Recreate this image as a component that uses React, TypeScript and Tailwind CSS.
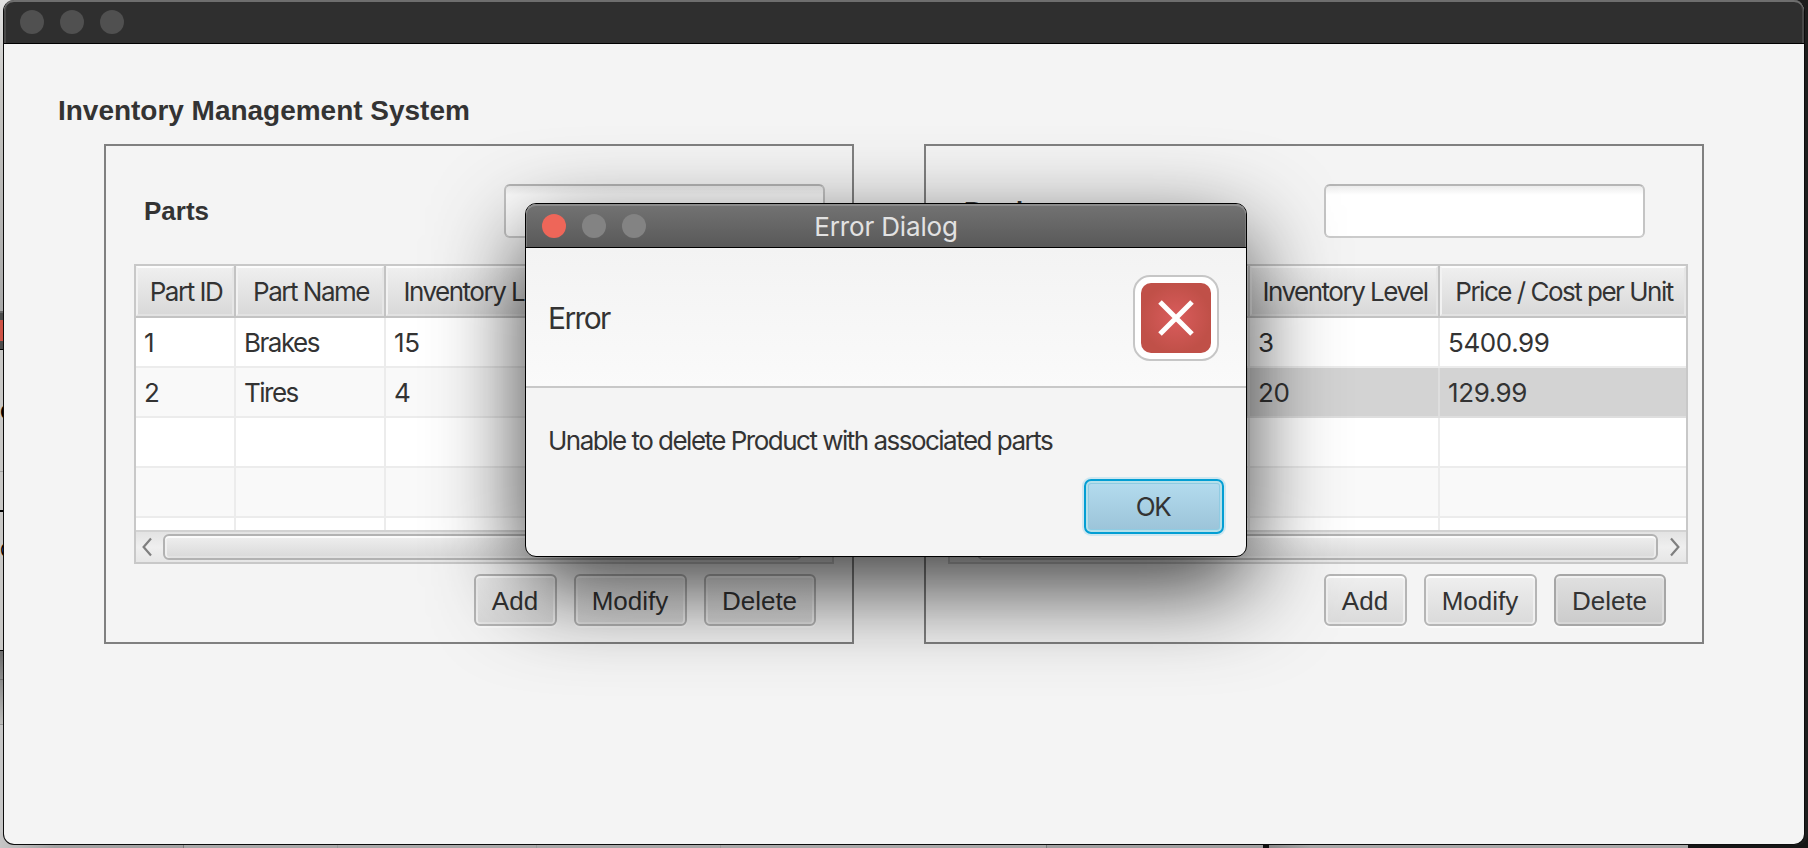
import React from 'react';

type Column = { label: string; width: string };
type Table = { columns: Column[]; rows: string[][]; selected?: number; thumbEnd: string };

const partsTable: Table = {
  columns: [
    { label: 'Part ID', width: 'w-[100px]' },
    { label: 'Part Name', width: 'w-[150px]' },
    { label: 'Inventory Level', width: 'w-[200px]' },
    { label: 'Price / Cost per Unit', width: 'w-[246px]' },
  ],
  rows: [['1', 'Brakes', '15', ''], ['2', 'Tires', '4', ''], [], []],
  thumbEnd: 'mr-[30px]',
};

const productsTable: Table = {
  columns: [
    { label: 'Product ID', width: 'w-[134px]' },
    { label: 'Product Name', width: 'w-[166px]' },
    { label: 'Inventory Level', width: 'w-[190px]' },
    { label: 'Price / Cost per Unit', width: 'w-[246px]' },
  ],
  rows: [['', '', '3', '5400.99'], ['', '', '20', '129.99'], [], []],
  selected: 1,
  thumbEnd: 'mr-[28px]',
};

function isNumber(text: string) {
  return /^[\d.]+$/.test(text);
}

function Arrow({ right = false }: { right?: boolean }) {
  return (
    <svg width="10" height="20" viewBox="0 0 10 20" fill="none" className="shrink-0">
      <path d={right ? 'M1 1.5 L8.4 10 L1 18.5' : 'M9 1.5 L1.6 10 L9 18.5'} stroke="#7f7f7f" strokeWidth="2.2" />
    </svg>
  );
}

function DataTable({ table }: { table: Table }) {
  const last = table.columns.length - 1;
  return (
    <div className="flex h-[300px] flex-col overflow-hidden border-2 border-[#c8c8c8] bg-white font-[Inter,sans-serif] text-[26px] leading-8 text-[#333333]">
      <div className="flex h-[52px] shrink-0 border-b-2 border-[#c3c3c3]">
        {table.columns.map((c, i) => (
          <div key={c.label} className={`${c.width} shrink-0 ${i < last ? 'border-r-2 border-[#c3c3c3]' : ''}`}>
            <div className="flex h-full items-center justify-center border-2 border-t-[#fcfcfc] border-r-[#e6e6e6] border-b-[#e2e2e2] border-l-[#f2f2f2] bg-linear-to-b from-[#efefef] to-[#d9d9d9] pt-[2px] pl-[2px] tracking-[-1.5px] whitespace-nowrap">
              {c.label}
            </div>
          </div>
        ))}
      </div>
      <div className="flex h-[212px] shrink-0 flex-col overflow-hidden">
        {[...table.rows, []].map((row, r) => {
          const selected = table.selected === r;
          const fill = selected ? 'bg-[#d3d3d3]' : r % 2 ? 'bg-[#f9f9f9]' : 'bg-white';
          const line = selected ? 'border-[#dedede]' : 'border-[#ececec]';
          return (
            <div key={r} className={`flex h-[50px] shrink-0 border-b-2 ${fill} ${line}`}>
              {table.columns.map((c, i) => (
                <div
                  key={c.label}
                  className={`${c.width} flex shrink-0 items-center pt-[2px] pl-2 ${i < last ? `border-r-2 ${line}` : ''} ${isNumber(row[i] ?? '') ? 'tracking-[-0.4px]' : 'tracking-[-1.5px]'}`}
                >
                  {row[i]}
                </div>
              ))}
            </div>
          );
        })}
      </div>
      <div className="flex h-8 shrink-0 items-center border-t-2 border-[#d2d2d2] bg-linear-to-b from-[#e3e3e3] via-[#efefef] to-[#e6e6e6] pl-[6px]">
        <Arrow />
        <div className={`ml-[11px] h-[26px] flex-1 rounded-md border-2 border-[#b2b2b2] bg-linear-to-b from-[#efefef] to-[#d9d9d9] shadow-[inset_0_2px_0_#fbfbfb,inset_2px_0_0_#f0f0f0,inset_-2px_0_0_#ececec,inset_0_-2px_0_#e2e2e2] ${table.thumbEnd}`} />
        <div className="-ml-[16px] flex w-[16px] shrink-0">
          <Arrow right />
        </div>
      </div>
    </div>
  );
}

function PanelButton({ label, width, pressed = false }: { label: string; width: string; pressed?: boolean }) {
  const tone = pressed
    ? 'border-[#a6a6a6] from-[#e0e0e0] to-[#cbcbcb] shadow-[inset_0_2px_0_#f0f0f0,inset_2px_0_0_#dedede,inset_-2px_0_0_#dedede,inset_0_-2px_0_#d6d6d6,0_2px_0_#fafafa]'
    : 'border-[#b5b5b5] from-[#efefef] to-[#dadada] shadow-[inset_0_2px_0_#fdfdfd,inset_2px_0_0_#f0f0f0,inset_-2px_0_0_#f0f0f0,inset_0_-2px_0_#e6e6e6,0_2px_0_#fafafa]';
  return (
    <button className={`${width} flex h-[52px] items-center justify-center rounded-md border-2 bg-linear-to-b pt-[2px] pr-px text-[26px] leading-8 text-[#333333] ${tone}`}>
      {label}
    </button>
  );
}

function Panel({ title, table, size, tableSize, pressed }: { title: string; table: Table; size: string; tableSize: string; pressed?: boolean }) {
  return (
    <section className={`${size} flex h-[500px] flex-col border-2 border-[#808080] pt-[38px]`}>
      <div className="flex items-center pl-[38px]">
        <h2 className="w-[360px] text-[26px] leading-8 font-bold">{title}</h2>
        <div className="h-[54px] w-[321px] rounded-md border-2 border-t-[#b5b5b5] border-r-[#c4c4c4] border-b-[#cbcbcb] border-l-[#c4c4c4] bg-linear-to-b from-[#ececec] via-white via-[18%] to-white" />
      </div>
      <div className={`mt-[26px] ${tableSize}`}>
        <DataTable table={table} />
      </div>
      <div className="mt-[10px] flex justify-end gap-[17px] pr-[36px]">
        <PanelButton label="Add" width="w-[83px]" />
        <PanelButton label="Modify" width="w-[113px]" />
        <PanelButton label="Delete" width="w-[112px]" pressed={pressed} />
      </div>
    </section>
  );
}

function Lights({ first, rest }: { first: string; rest: string }) {
  return (
    <div className="flex gap-4">
      <span className={`size-6 rounded-full ${first}`} />
      <span className={`size-6 rounded-full ${rest}`} />
      <span className={`size-6 rounded-full ${rest}`} />
    </div>
  );
}

function ErrorDialog() {
  return (
    <div className="absolute top-[203px] left-[525px] flex h-[354px] w-[722px] flex-col overflow-hidden rounded-[11px] border border-black bg-[#f4f4f4] font-[Inter,sans-serif] text-[#333333] shadow-[0_31px_90px_rgba(0,0,0,0.76)]">
      <div className="relative flex h-11 shrink-0 items-center justify-center rounded-t-[10px] border-b border-black bg-linear-to-b from-[#737373] to-[#595959] shadow-[inset_0_2px_0_#8c8c8c,inset_1px_0_0_#7c7c7c,inset_-1px_0_0_#7c7c7c]">
        <div className="absolute left-4">
          <Lights first="bg-[#ee6659]" rest="bg-[#838383]" />
        </div>
        <span className="pt-[2px] text-[26px] leading-8 tracking-[-0.15px] text-[#e2e2e2]">Error Dialog</span>
      </div>
      <div className="flex h-[140px] shrink-0 items-center justify-between border-b-2 border-[#c8c8c8] bg-linear-to-b from-[#f3f3f3] to-[#fafafa] pt-[2px] pr-[27px] pl-[22px]">
        <span className="text-[30px] leading-9 tracking-[-1.65px]">Error</span>
        <div className="flex size-[86px] items-center justify-center rounded-[17px] border-2 border-[#c6c6c6] bg-white">
          <div className="flex size-[70px] items-center justify-center rounded-[10px] bg-radial from-[#da5c5c] to-[#c05048] to-70%">
            <svg width="36" height="36" viewBox="0 0 36 36" stroke="white" strokeWidth="5">
              <path d="M2 2 L34 34 M34 2 L2 34" />
            </svg>
          </div>
        </div>
      </div>
      <div className="flex flex-1 flex-col pl-[22px]">
        <p className="mt-[37px] text-[26px] leading-8 tracking-[-1.51px] whitespace-nowrap">Unable to delete Product with associated parts</p>
        <button className="mt-[22px] mr-[22px] flex h-[55px] w-[140px] items-center justify-center self-end rounded-[7px] border-2 border-[#039ed3] bg-linear-to-b from-[#b4dcef] to-[#9bc3d8] pt-px pr-[2px] text-[26px] leading-8 tracking-[-1.4px] shadow-[inset_0_0_0_2px_#b5e0ea,inset_0_0_0_3px_#8fcbe2,0_0_0_2px_#cfe7f0]">
          OK
        </button>
      </div>
    </div>
  );
}

function Backdrop() {
  return (
    <div className="absolute inset-0 flex flex-col">
      <div className="relative flex w-4 flex-1 flex-col overflow-hidden bg-[#c9c8c6]">
        <div className="h-[311px] shrink-0 bg-linear-to-b from-[#e2e2e2] via-[#c6c5c2] via-30% to-[#a9a9a9]" />
        <div className="h-[9px] shrink-0 border-t-2 border-[#6a6a6a] bg-[#4c4c4c]" />
        <div className="h-[21px] shrink-0 bg-[#cf5346]" />
        <div className="h-[9px] shrink-0 border-b border-black bg-[#4c4c4c]" />
        <div className="h-[122px] shrink-0 border-b border-[#a2a2a2] pt-[50px] font-[Inter,sans-serif] text-[22px] leading-[24px] font-bold text-black">O</div>
        <div className="h-[40px] shrink-0 border-b-2 border-black" />
        <div className="h-[139px] shrink-0 border-b border-black pt-[27px] font-[Inter,sans-serif] text-[18px] leading-[24px] text-black">O</div>
        <div className="h-[29px] shrink-0 border-b border-[#6e6e6e] bg-linear-to-b from-[#6c6c6c] to-[#8c8c8c]" />
        <div className="h-[45px] shrink-0 border-b border-[#9a9a9a] bg-linear-to-b from-[#8c8c8c] to-[#bcbcba]" />
        <div className="flex-1 bg-[#c6c6c6]" />
      </div>
      <div className="flex h-4 shrink-0 bg-[#a8a8a8]">
        <div className="w-[184px] border-r border-[#7c7c7c] bg-linear-to-r from-[#c6c6c6] to-[#a2a2a2] to-30%" />
        <div className="w-[154px] border-r border-[#9a9a9a]" />
        <div className="w-[199px] border-r border-[#9a9a9a]" />
        <div className="w-[184px] border-r border-[#9a9a9a]" />
        <div className="w-[326px] border-r border-[#7c7c7c]" />
        <div className="w-[216px] bg-[#a0a0a0]" />
        <div className="w-[6px] bg-[#111111]" />
        <div className="w-[419px] bg-linear-to-r from-[#8a8a8a] to-[#a8a8a8] to-10%" />
        <div className="flex-1 bg-[#161616]" />
      </div>
    </div>
  );
}

export default function App() {
  return (
    <div className="relative h-[848px] w-[1808px] overflow-hidden bg-[#1c1c1c] font-['Liberation_Sans',Arial,sans-serif]">
      <Backdrop />
      <div className="relative ml-[3px] flex h-[845px] w-[1802px] flex-col overflow-hidden rounded-[11px] border-x border-b border-[#0c0c0c] bg-[#f4f4f4] text-[#333333] shadow-[3px_0_0_#1d1d1d]">
        <div className="flex h-11 shrink-0 items-center rounded-t-[10px] border-b border-black bg-[#2f2f2f] pl-4 shadow-[inset_0_2px_0_#6e6e6e,inset_2px_0_0_#484848,inset_-2px_0_0_#484848]">
          <Lights first="bg-[#505050]" rest="bg-[#505050]" />
        </div>
        <h1 className="mt-[51px] pl-[54px] text-[28px] leading-8 font-bold tracking-[-0.02px]">Inventory Management System</h1>
        <main className="mt-[17px] flex gap-[70px] pl-[100px]">
          <Panel title="Parts" table={partsTable} size="w-[750px]" tableSize="ml-[28px] w-[700px]" />
          <Panel title="Products" table={productsTable} size="w-[780px]" tableSize="ml-[22px] w-[740px]" pressed />
        </main>
      </div>
      <ErrorDialog />
    </div>
  );
}
